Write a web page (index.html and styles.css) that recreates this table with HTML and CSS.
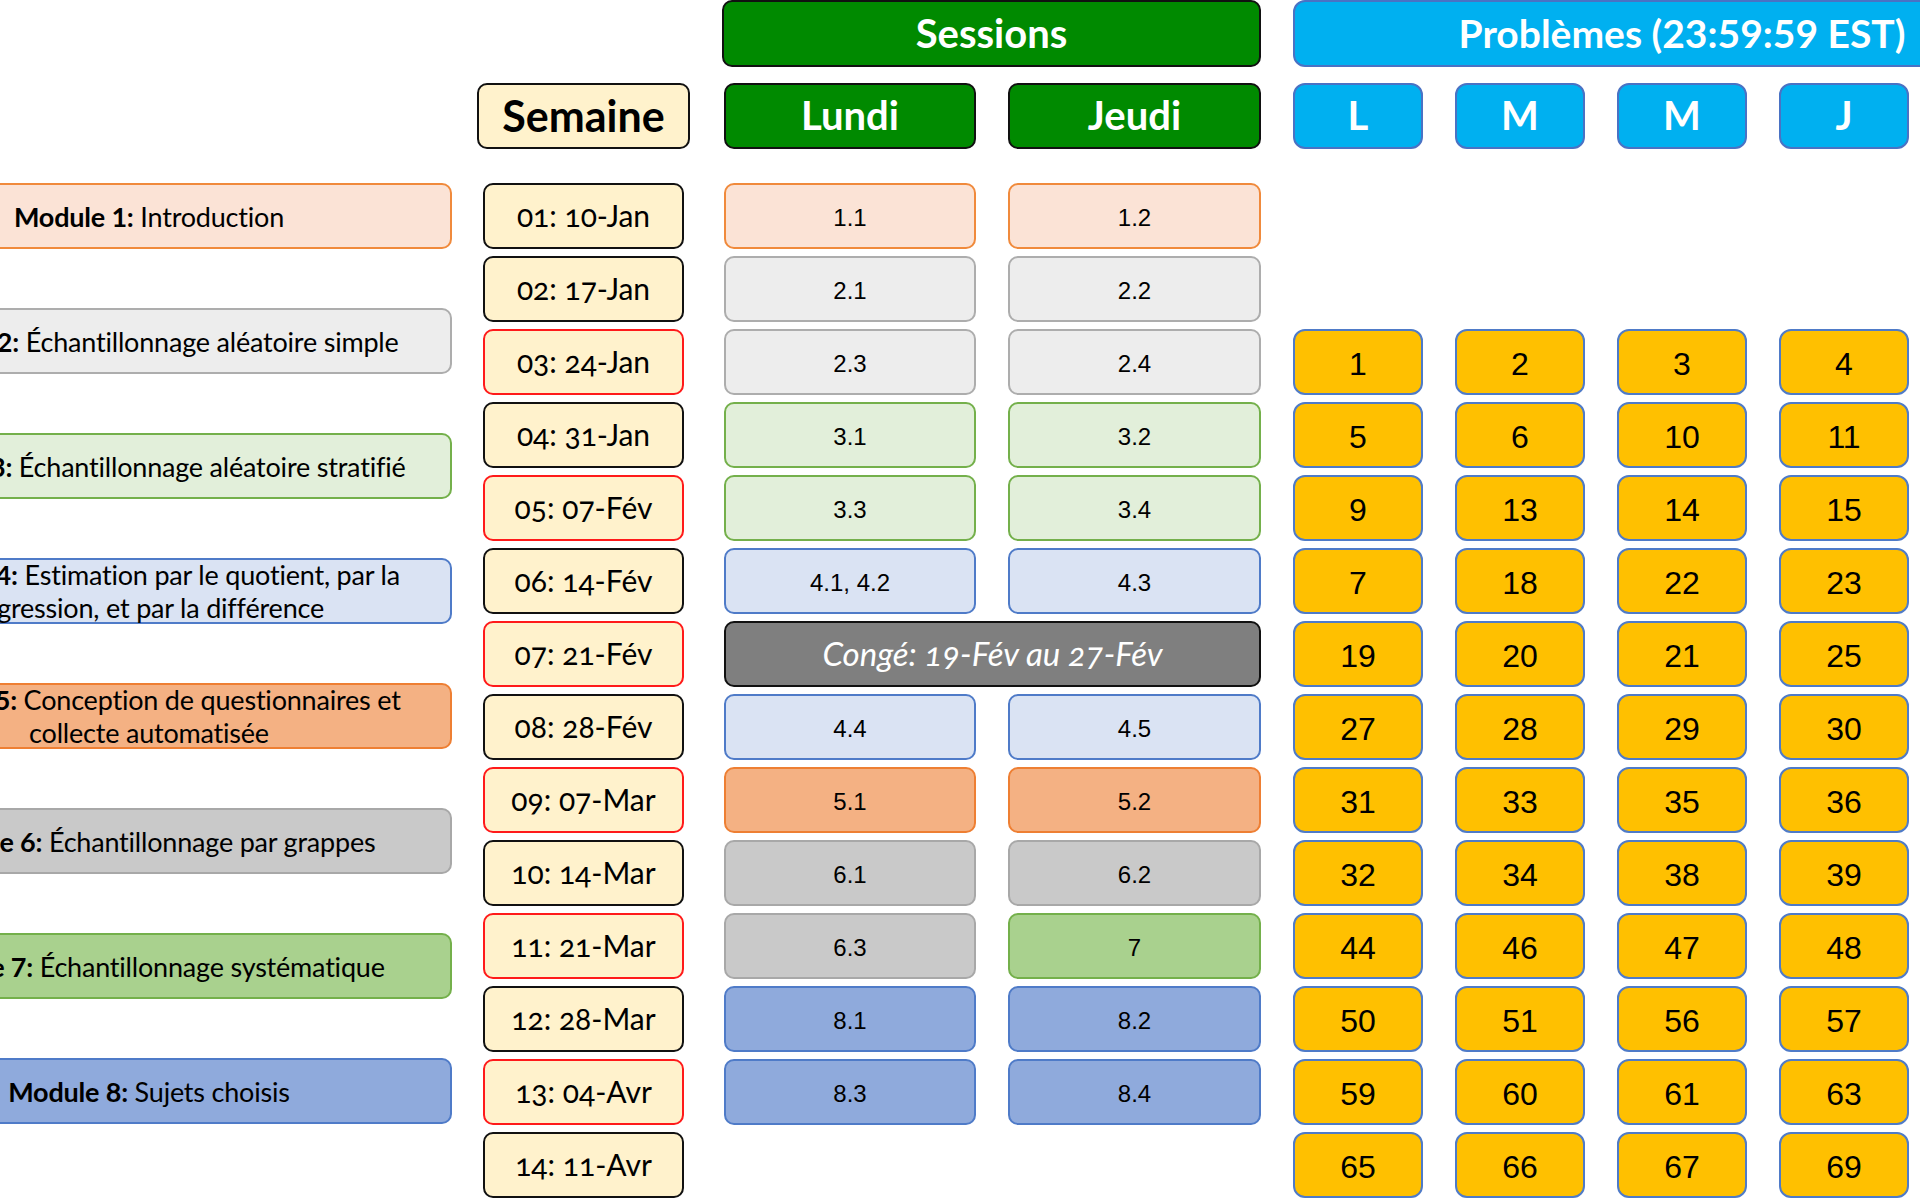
FILE: index.html
```html
<!DOCTYPE html>
<html lang="fr">
<head>
<meta charset="utf-8">
<title>Calendrier</title>
<link rel="stylesheet" href="styles.css">
</head>
<body>
<div class="board">
  <div class="modules">
    <div class="module m1"><span><b>Module 1:</b> Introduction</span></div>
    <div class="module m2"><span><b>Module 2:</b> Échantillonnage aléatoire simple</span></div>
    <div class="module m3"><span><b>Module 3:</b> Échantillonnage aléatoire stratifié</span></div>
    <div class="module m4"><span><b>Module 4:</b> Estimation par le quotient, par la<br>régression, et par la différence</span></div>
    <div class="module m5"><span><b>Module 5:</b> Conception de questionnaires et<br>collecte automatisée</span></div>
    <div class="module m6"><span><b>Module 6:</b> Échantillonnage par grappes</span></div>
    <div class="module m7"><span><b>Module 7:</b> Échantillonnage systématique</span></div>
    <div class="module m8"><span><b>Module 8:</b> Sujets choisis</span></div>
  </div>
  <div class="schedule">
    <div class="head">
      <div class="hd green top sessions-span">Sessions</div>
      <div class="hd blue top problems-span">Problèmes (23:59:59 EST)</div>
      <div class="hd week-hd second">Semaine</div>
      <div class="hd green second lundi">Lundi</div>
      <div class="hd green second">Jeudi</div>
      <div class="hd blue second">L</div>
      <div class="hd blue second">M</div>
      <div class="hd blue second">M</div>
      <div class="hd blue second">J</div>
      <div class="hd blue second">V</div>
    </div>
    <div class="body">
      <div class="week">01: 10-Jan</div>
      <div class="sess m1 lundi">1.1</div><div class="sess m1">1.2</div>
      <div class="empty"></div><div class="empty"></div><div class="empty"></div><div class="empty"></div>

      <div class="week">02: 17-Jan</div>
      <div class="sess m2 lundi">2.1</div><div class="sess m2">2.2</div>
      <div class="empty"></div><div class="empty"></div><div class="empty"></div><div class="empty"></div>

      <div class="week red">03: 24-Jan</div>
      <div class="sess m2 lundi">2.3</div><div class="sess m2">2.4</div>
      <div class="prob">1</div><div class="prob">2</div><div class="prob">3</div><div class="prob">4</div>

      <div class="week">04: 31-Jan</div>
      <div class="sess m3 lundi">3.1</div><div class="sess m3">3.2</div>
      <div class="prob">5</div><div class="prob">6</div><div class="prob">10</div><div class="prob">11</div>

      <div class="week red">05: 07-Fév</div>
      <div class="sess m3 lundi">3.3</div><div class="sess m3">3.4</div>
      <div class="prob">9</div><div class="prob">13</div><div class="prob">14</div><div class="prob">15</div>

      <div class="week">06: 14-Fév</div>
      <div class="sess m4 lundi">4.1, 4.2</div><div class="sess m4">4.3</div>
      <div class="prob">7</div><div class="prob">18</div><div class="prob">22</div><div class="prob">23</div>

      <div class="week red">07: 21-Fév</div>
      <div class="conge lundi">Congé: 19-Fév au 27-Fév</div>
      <div class="prob">19</div><div class="prob">20</div><div class="prob">21</div><div class="prob">25</div>

      <div class="week">08: 28-Fév</div>
      <div class="sess m4 lundi">4.4</div><div class="sess m4">4.5</div>
      <div class="prob">27</div><div class="prob">28</div><div class="prob">29</div><div class="prob">30</div>

      <div class="week red">09: 07-Mar</div>
      <div class="sess m5 lundi">5.1</div><div class="sess m5">5.2</div>
      <div class="prob">31</div><div class="prob">33</div><div class="prob">35</div><div class="prob">36</div>

      <div class="week">10: 14-Mar</div>
      <div class="sess m6 lundi">6.1</div><div class="sess m6">6.2</div>
      <div class="prob">32</div><div class="prob">34</div><div class="prob">38</div><div class="prob">39</div>

      <div class="week red">11: 21-Mar</div>
      <div class="sess m6 lundi">6.3</div><div class="sess m7">7</div>
      <div class="prob">44</div><div class="prob">46</div><div class="prob">47</div><div class="prob">48</div>

      <div class="week">12: 28-Mar</div>
      <div class="sess m8 lundi">8.1</div><div class="sess m8">8.2</div>
      <div class="prob">50</div><div class="prob">51</div><div class="prob">56</div><div class="prob">57</div>

      <div class="week red">13: 04-Avr</div>
      <div class="sess m8 lundi">8.3</div><div class="sess m8">8.4</div>
      <div class="prob">59</div><div class="prob">60</div><div class="prob">61</div><div class="prob">63</div>

      <div class="week">14: 11-Avr</div>
      <div class="empty"></div><div class="empty"></div>
      <div class="prob">65</div><div class="prob">66</div><div class="prob">67</div><div class="prob">69</div>
    </div>
  </div>
</div>
</body>
</html>
```
FILE: styles.css
```css
html, body {
  margin: 0;
  padding: 0;
  background: #ffffff;
}
body {
  width: 1920px;
  height: 1200px;
  overflow: hidden;
  font-family: "Lato", "Open Sans", sans-serif;
  color: #000;
}
.board {
  display: flex;
  align-items: flex-start;
  gap: 25px;
  margin-left: -154px;
}
.modules {
  width: 606px;
  flex: none;
  padding-top: 183px;
  display: flex;
  flex-direction: column;
  gap: 59px;
}
.module {
  box-sizing: border-box;
  height: 66px;
  border-width: 2px;
  border-style: solid;
  border-radius: 10px;
  display: flex;
  align-items: center;
  justify-content: center;
  text-align: center;
  font-size: 27px;
  line-height: 33px;
  white-space: nowrap;
  letter-spacing: -0.2px;
}
.module b { font-weight: 700; }

.sess {
  box-sizing: border-box;
  border-width: 2px;
  border-style: solid;
  border-radius: 10px;
  display: flex;
  align-items: center;
  justify-content: center;
  font-family: "Liberation Sans", Arial, sans-serif;
  font-size: 24px;
  padding-top: 3px;
}

.m1 { background: #fbe3d6; border-color: #f08a3c; }
.m2 { background: #ededed; border-color: #adadad; }
.m3 { background: #e2efda; border-color: #74b04b; }
.m4 { background: #dae3f3; border-color: #4f7bc8; }
.m5 { background: #f4b183; border-color: #ee7f33; }
.m6 { background: #c9c9c9; border-color: #a8a8a8; }
.m7 { background: #a9d18e; border-color: #74b04b; }
.m8 { background: #8faadc; border-color: #4f7bc8; }

.schedule {
  flex: none;
  display: flex;
  flex-direction: column;
}
.head {
  display: grid;
  grid-template-columns: 213px 254px 253px repeat(5, 130px);
  grid-template-rows: 67px 66px;
  column-gap: 32px;
  row-gap: 16px;
}
.body {
  margin-top: 34px;
  display: grid;
  grid-template-columns: 213px 254px 253px repeat(4, 130px);
  grid-auto-rows: 66px;
  column-gap: 32px;
  row-gap: 7px;
}
.hd {
  box-sizing: border-box;
  border-width: 2px;
  border-style: solid;
  border-radius: 10px;
  display: flex;
  align-items: center;
  justify-content: center;
  font-weight: 700;
  font-size: 40px;
  color: #fff;
  padding-bottom: 2px;
}
.top { grid-row: 1; }
.second { grid-row: 2; }
.sessions-span { grid-column: 2 / 4; }
.problems-span { grid-column: 4 / 9; font-size: 39px; }
.green { background: #008a00; border-color: #111; }
.blue { background: #00b0f0; border-color: #4a72c4; border-radius: 12px; }
.week-hd {
  background: #fff2cc;
  border-color: #111;
  color: #000;
  font-size: 43px;
}
.lundi { margin-left: 2px; }

.week {
  box-sizing: border-box;
  margin: 0 6px;
  border: 2px solid #111;
  border-radius: 10px;
  background: #fff2cc;
  display: flex;
  align-items: center;
  justify-content: center;
  font-size: 30px;
  font-variant-numeric: oldstyle-nums;
  padding-bottom: 2px;
}
.week.red { border-color: #ff1a1a; }

.conge {
  grid-column: span 2;
  box-sizing: border-box;
  border: 2px solid #111;
  border-radius: 10px;
  background: #7f7f7f;
  color: #fff;
  display: flex;
  align-items: center;
  justify-content: center;
  font-style: italic;
  font-size: 33px;
  font-variant-numeric: oldstyle-nums;
  padding-bottom: 2px;
}
.prob {
  box-sizing: border-box;
  border: 2px solid #4f7bc8;
  border-radius: 12px;
  background: #ffc000;
  display: flex;
  align-items: center;
  justify-content: center;
  font-family: "Liberation Sans", Arial, sans-serif;
  font-size: 32px;
  padding-top: 5px;
}
.empty { }
```
